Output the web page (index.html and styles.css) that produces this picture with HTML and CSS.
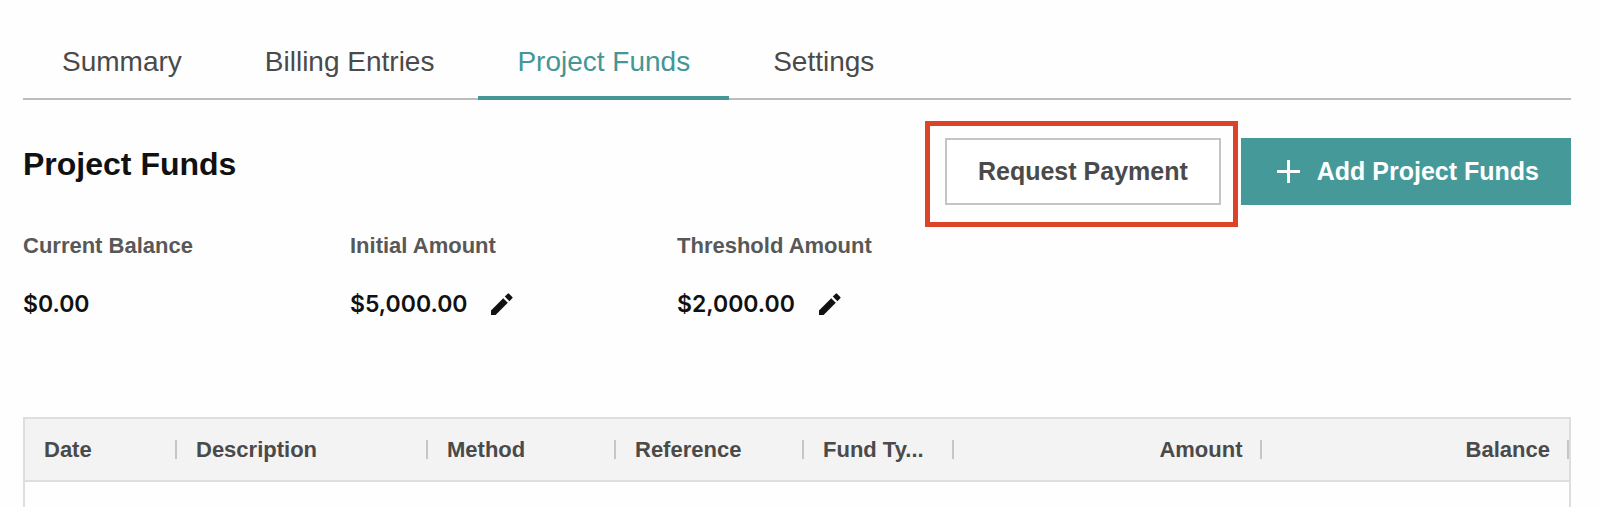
FILE: index.html
```html
<!DOCTYPE html>
<html lang="en">
  <head>
    <meta charset="UTF-8" />
    <meta name="viewport" content="width=device-width, initial-scale=1.0" />
    <title>Project Funds</title>
    <link rel="stylesheet" href="styles.css">
  </head>
  <body>
    <!-- Tabs -->
    <nav class="tabs">
      <a class="tab" href="#">Summary</a>
      <a class="tab" href="#">Billing Entries</a>
      <a class="tab active" href="#">Project Funds</a>
      <a class="tab" href="#">Settings</a>
    </nav>

    <!-- Title and actions -->
    <header class="page-header">
      <h1>Project Funds</h1>
      <div class="actions">
        <div class="highlight">
          <button type="button" class="btn btn-outline">Request Payment</button>
        </div>
        <button type="button" class="btn btn-primary">
          <svg width="23" height="23" viewBox="0 0 23 23" aria-hidden="true">
            <path d="M11.5 0v23M0 11.5h23" stroke="currentColor" stroke-width="3" />
          </svg>
          Add Project Funds
        </button>
      </div>
    </header>

    <!-- Balances -->
    <dl class="amounts">
      <div>
        <dt>Current Balance</dt>
        <dd>$0.00</dd>
      </div>
      <div>
        <dt>Initial Amount</dt>
        <dd>
          $5,000.00
          <button type="button" class="edit" aria-label="Edit initial amount">
            <svg width="22" height="22" viewBox="0 0 22 22">
              <path d="M0 22v-4.6L12.2 5.2l4.6 4.6L4.6 22zM13.8 3.6L16.7.7q.7-.7 1.4 0l3.2 3.2q.7.7 0 1.4l-2.9 2.9z" />
            </svg>
          </button>
        </dd>
      </div>
      <div>
        <dt>Threshold Amount</dt>
        <dd>
          $2,000.00
          <button type="button" class="edit" aria-label="Edit threshold amount">
            <svg width="22" height="22" viewBox="0 0 22 22">
              <path d="M0 22v-4.6L12.2 5.2l4.6 4.6L4.6 22zM13.8 3.6L16.7.7q.7-.7 1.4 0l3.2 3.2q.7.7 0 1.4l-2.9 2.9z" />
            </svg>
          </button>
        </dd>
      </div>
    </dl>

    <!-- Funds table -->
    <div class="grid">
      <table>
        <thead>
          <tr>
            <th class="col-date"><span>Date</span></th>
            <th class="col-description"><span>Description</span></th>
            <th class="col-method"><span>Method</span></th>
            <th class="col-reference"><span>Reference</span></th>
            <th class="col-type"><span>Fund Ty...</span></th>
            <th class="number"><span>Amount</span></th>
            <th class="number"><span>Balance</span></th>
          </tr>
        </thead>
        <tbody></tbody>
      </table>
    </div>
  </body>
</html>
```

FILE: styles.css
```css
* {
  box-sizing: border-box;
}

body {
  display: flex;
  flex-direction: column;
  min-height: 100vh;
  margin: 0;
  padding: 0 29px 0 23px;
  background: #fefefe;
  color: #4a4a4a;
  font-family: "Liberation Sans", Arial, sans-serif;
}

/* Tabs */
.tabs {
  display: flex;
  gap: 5px;
  padding-top: 46px;
  box-shadow: inset 0 -2px #bdbdbd;
}

.tab {
  padding: 0 39px 18px;
  border-bottom: 4px solid transparent;
  color: #4a4a4a;
  font-size: 28px;
  line-height: 32px;
  text-decoration: none;
}

.tab.active {
  border-color: #459695;
  color: #459695;
}

/* Title and actions */
.page-header {
  display: flex;
  justify-content: space-between;
  align-items: flex-start;
  padding-top: 21px;
}

h1 {
  margin: 25px 0 0;
  color: #111;
  font-size: 32px;
  line-height: 36px;
}

.actions {
  display: flex;
  align-items: flex-start;
  gap: 3px;
}

.highlight {
  padding: 12px 12px 17px 15px;
  border: 5px solid #dc4329;
}

.btn {
  display: flex;
  align-items: center;
  height: 67px;
  font-family: inherit;
  font-size: 25px;
  font-weight: bold;
  cursor: pointer;
}

.btn-outline {
  padding: 0 31px;
  border: 2px solid #c4c4c4;
  background: #fff;
  color: #4a4a4a;
}

.btn-primary {
  gap: 17px;
  margin-top: 17px;
  padding: 0 32px 0 36px;
  border: none;
  background: #459a99;
  color: #fff;
}

/* Balances */
.amounts {
  display: grid;
  grid-template-columns: repeat(3, 327px);
  margin: 6px 0 99px;
}

.amounts dt {
  margin-bottom: 31px;
  color: #585858;
  font-size: 22px;
  font-weight: bold;
  line-height: 26px;
}

.amounts dd {
  display: flex;
  align-items: center;
  gap: 24px;
  margin: 0;
  color: #111;
  font-family: Inter, sans-serif;
  font-size: 23px;
  font-weight: 600;
  line-height: 28px;
}

.edit {
  display: flex;
  padding: 0;
  border: none;
  background: none;
  color: #111;
  cursor: pointer;
}

.edit svg {
  fill: currentColor;
}

/* Funds table */
.grid {
  flex: 1;
  border: 2px solid #dedede;
  border-bottom: none;
}

table {
  width: 100%;
  table-layout: fixed;
  border-collapse: collapse;
}

thead {
  background: #f3f3f3;
  box-shadow: 0 2px #dedede;
}

th {
  height: 61px;
  padding: 0;
  font-size: 22px;
  text-align: left;
}

th span {
  display: block;
  padding: 0 17px 0 19px;
  border-right: 2px solid #c6c6c6;
  line-height: 19px;
  white-space: nowrap;
}

.number {
  text-align: right;
}

.col-date {
  width: 152px;
}

.col-description {
  width: 251px;
}

.col-method,
.col-reference {
  width: 188px;
}

.col-type {
  width: 150px;
}
```
